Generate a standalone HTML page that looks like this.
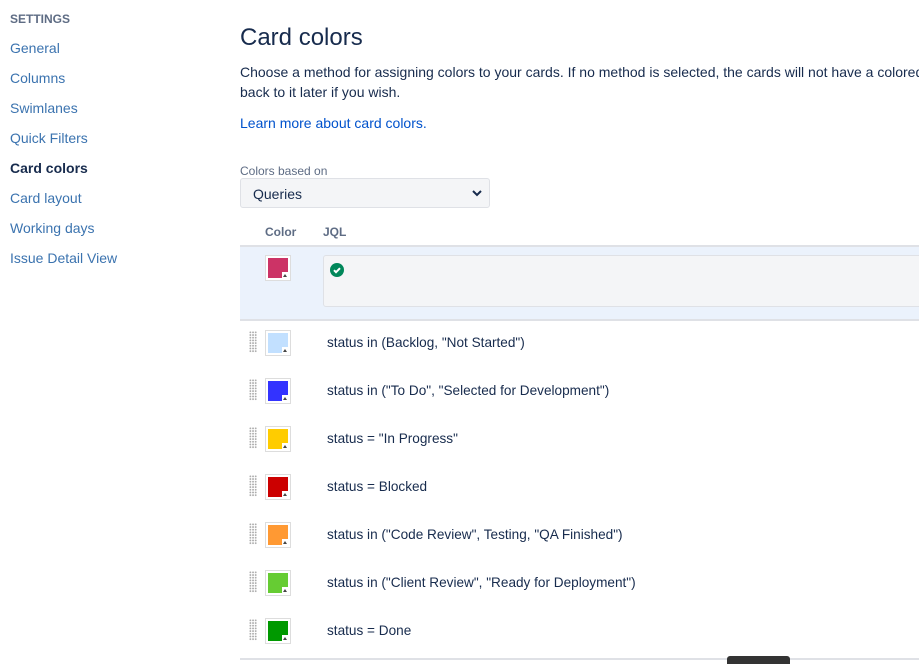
<!DOCTYPE html>
<html><head><meta charset="utf-8"><style>
body{margin:0;width:919px;height:663px;overflow:hidden;background:#fff;font-family:"Liberation Sans",sans-serif;color:#172b4d;position:relative}
.a{position:absolute;white-space:nowrap}
.nav{left:10px;font-size:14px;color:#3b73af}
.sw{position:absolute;left:265px;width:26px;height:26px;border:1px solid #ddd;box-sizing:border-box;background:#fff}
.sw i{position:absolute;left:2px;top:2px;width:20px;height:20px}
.sw b{position:absolute;right:1px;bottom:1px;width:7px;height:7px;background:#fff}
.sw b:after{content:"";position:absolute;left:1px;top:2px;border-left:2.5px solid transparent;border-right:2.5px solid transparent;border-bottom:3px solid #444}
.h{position:absolute;left:249px;width:8px;height:22px;background-image:radial-gradient(#aaa 0.8px,transparent 1px);background-size:2.7px 2.7px}
.t{position:absolute;left:327px;font-size:13.6px;color:#172b4d}
</style></head><body>
<div class="a" style="left:10px;top:12px;font-size:12px;font-weight:bold;color:#5e6c84">SETTINGS</div>
<div class="a nav" style="top:40px">General</div>
<div class="a nav" style="top:70px">Columns</div>
<div class="a nav" style="top:100px">Swimlanes</div>
<div class="a nav" style="top:130px">Quick Filters</div>
<div class="a nav" style="top:160px;color:#172b4d;font-weight:bold">Card colors</div>
<div class="a nav" style="top:190px">Card layout</div>
<div class="a nav" style="top:220px">Working days</div>
<div class="a nav" style="top:250px">Issue Detail View</div>

<div class="a" style="left:240px;top:24px;font-size:24px;font-weight:500">Card colors</div>
<div class="a" style="left:240px;top:62px;font-size:14px;line-height:20px">Choose a method for assigning colors to your cards. If no method is selected, the cards will not have a colored<br>back to it later if you wish.</div>
<div class="a" style="left:240px;top:115px;font-size:14px;color:#0052cc">Learn more about card colors.</div>
<div class="a" style="left:240px;top:164px;font-size:12px;color:#5e6c84">Colors based on</div>
<div class="a" style="left:240px;top:178px;width:250px;height:30px;box-sizing:border-box;border:1px solid #dfe1e6;border-radius:3px;background:#f4f5f7"><span style="position:absolute;left:12px;top:7px;font-size:14px">Queries</span>
<svg style="position:absolute;right:7px;top:11px" width="10" height="7" viewBox="0 0 10 7"><path d="M1 1l4 4 4-4" stroke="#172b4d" stroke-width="2" fill="none"/></svg></div>
<div class="a" style="left:265px;top:225px;font-size:12px;font-weight:bold;color:#5e6c84">Color</div>
<div class="a" style="left:323px;top:225px;font-size:12px;font-weight:bold;color:#5e6c84">JQL</div>
<div class="a" style="left:240px;top:245px;width:679px;height:76px;background:#ebf2fc;border-top:2px solid #dfe1e6;border-bottom:2px solid #dfe1e6;box-sizing:border-box"></div>
<div class="sw" style="top:255px"><i style="background:#cc3366"></i><b></b></div>
<div class="a" style="left:323px;top:255px;width:600px;height:52px;background:#f4f5f7;border:1px solid #dfe1e6;border-radius:3px;box-sizing:border-box"></div>
<svg class="a" style="left:330px;top:263px" width="14" height="14" viewBox="0 0 14 14"><circle cx="7" cy="7" r="7" fill="#00875a"/><path d="M4 7.2l2 2 4-4" stroke="#fff" stroke-width="2" fill="none"/></svg>

<div class="h" style="top:331px"></div><div class="sw" style="top:330px"><i style="background:#c2e0ff"></i><b></b></div><div class="t" style="top:335px">status in (Backlog, "Not Started")</div>
<div class="h" style="top:379px"></div><div class="sw" style="top:378px"><i style="background:#3333ff"></i><b></b></div><div class="t" style="top:383px">status in ("To Do", "Selected for Development")</div>
<div class="h" style="top:427px"></div><div class="sw" style="top:426px"><i style="background:#ffcc00"></i><b></b></div><div class="t" style="top:431px">status = "In Progress"</div>
<div class="h" style="top:475px"></div><div class="sw" style="top:474px"><i style="background:#cc0000"></i><b></b></div><div class="t" style="top:479px">status = Blocked</div>
<div class="h" style="top:523px"></div><div class="sw" style="top:522px"><i style="background:#ff9933"></i><b></b></div><div class="t" style="top:527px">status in ("Code Review", Testing, "QA Finished")</div>
<div class="h" style="top:571px"></div><div class="sw" style="top:570px"><i style="background:#66cc33"></i><b></b></div><div class="t" style="top:575px">status in ("Client Review", "Ready for Deployment")</div>
<div class="h" style="top:619px"></div><div class="sw" style="top:618px"><i style="background:#009900"></i><b></b></div><div class="t" style="top:623px">status = Done</div>
<div class="a" style="left:240px;top:658px;width:679px;height:2px;background:#dfe1e6"></div>
<div class="a" style="left:727px;top:656px;width:63px;height:8px;background:#333;border-radius:3px 3px 0 0"></div>
</body></html>
